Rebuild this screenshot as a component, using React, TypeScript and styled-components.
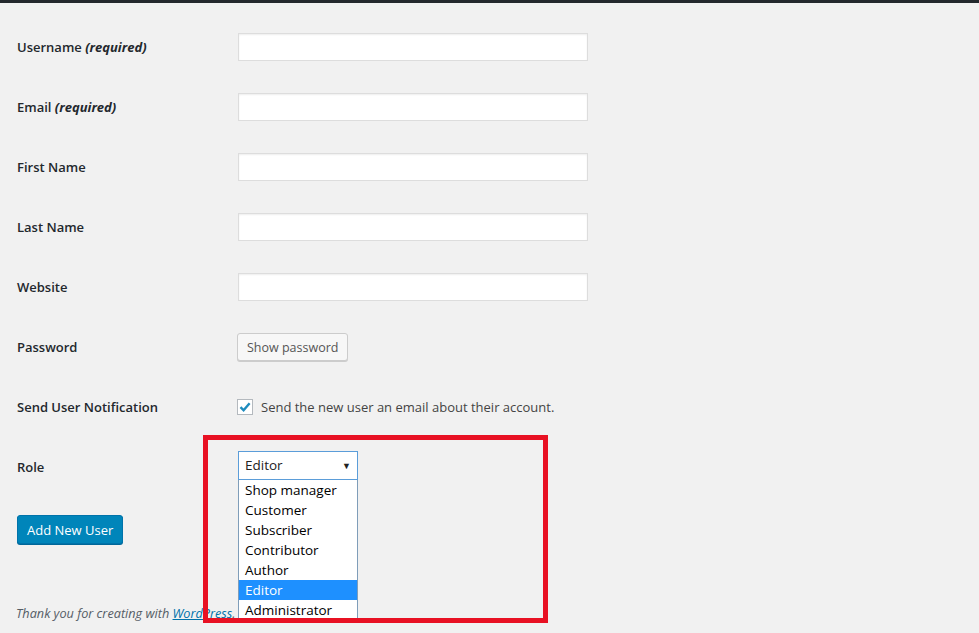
import React from 'react';
import styled, { createGlobalStyle } from 'styled-components';

const GlobalStyle = createGlobalStyle`
html, body {
margin:0;
padding:0;
background:#f1f1f1;
font-family:"Open Sans", "Noto Sans", sans-serif;
color:#23282d;
}
`;

const Page = styled.div`
position:relative;
width:979px;
height:633px;
overflow:hidden;
background:#f1f1f1;
`;
const TopBar = styled.div`
height:3px;
background:#23282d;
`;
const Content = styled.div`
padding:14px 0 0 17px;
`;
const FormTable = styled.div`
display:grid;
grid-template-columns:221px 1fr;
grid-auto-rows:60px;
align-items:center;
`;
const Label = styled.div`
font-size:13px;
font-weight:600;
color:#23282d;
`;
const Required = styled.em`
font-weight:700;
`;
const Field = styled.div`
display:flex;
align-items:center;
`;
const TextInput = styled.input`
box-sizing:border-box;
width:350px;
height:28px;
margin:0;
border:1px solid #ddd;
box-shadow:inset 0 1px 2px rgba(0,0,0,0.07);
background:#fff;
`;
const SecondaryButton = styled.button`
box-sizing:border-box;
height:28px;
padding:0 9px;
margin-left:-1px;
font-family:"Open Sans", sans-serif;
font-size:12.5px;
color:#555;
background:#f7f7f7;
border:1px solid #ccc;
border-radius:3px;
box-shadow:0 1px 0 #ccc;
`;
const CheckLabel = styled.label`
display:flex;
align-items:center;
gap:8px;
margin-left:-1px;
font-size:13px;
color:#444;
`;
const CheckBox = styled.span`
box-sizing:border-box;
width:16px;
height:16px;
border:1px solid #b4b9be;
background:#fff;
display:flex;
align-items:center;
justify-content:center;
`;
const SelectWrap = styled.div`
position:relative;
margin-top:-4px;
`;
const SelectBox = styled.div`
box-sizing:border-box;
width:120px;
height:29px;
padding:0 6px;
display:flex;
align-items:center;
justify-content:space-between;
background:#fff;
border:1px solid #5b9dd9;
font-size:13.5px;
color:#222;
`;
const Arrow = styled.span`
font-size:9px;
color:#222;
`;
const OptionList = styled.ul`
position:absolute;
left:0;
top:100%;
z-index:3;
box-sizing:border-box;
width:120px;
height:141px;
margin:0;
padding:0;
list-style:none;
overflow:hidden;
background:#fff;
border:1px solid #7f9db9;
border-top:none;
`;
const Option = styled.li<{ selected?: boolean }>`
height:20px;
line-height:20px;
padding-left:6px;
font-size:13.5px;
color:${p => (p.selected ? '#fff' : '#000')};
background:${p => (p.selected ? '#1e90ff' : 'transparent')};
`;
const PrimaryButton = styled.button`
margin-top:18px;
box-sizing:border-box;
height:29px;
padding:0 9px;
font-family:"Open Sans", sans-serif;
font-size:13px;
color:#fff;
background:#0085ba;
border:1px solid #0073aa;
border-radius:3px;
box-shadow:0 1px 0 #006799;
`;
const Footer = styled.p`
margin:60px 0 0 -1px;
font-size:12.7px;
font-style:italic;
color:#555d66;
`;
const FooterLink = styled.a`
color:#0073aa;
text-decoration:underline;
`;
const Highlight = styled.div`
position:absolute;
left:203px;
top:435px;
width:345px;
height:188px;
box-sizing:border-box;
border:5px solid #e81123;
z-index:4;
pointer-events:none;
`;

const roles = ['Shop manager', 'Customer', 'Subscriber', 'Contributor', 'Author', 'Editor', 'Administrator'];

const App = () => {
    return <Page>
        <GlobalStyle />
        <TopBar />
        <Content>
            <FormTable>
                <Label>Username <Required>(required)</Required></Label>
                <Field><TextInput /></Field>
                <Label>Email <Required>(required)</Required></Label>
                <Field><TextInput /></Field>
                <Label>First Name</Label>
                <Field><TextInput /></Field>
                <Label>Last Name</Label>
                <Field><TextInput /></Field>
                <Label>Website</Label>
                <Field><TextInput /></Field>
                <Label>Password</Label>
                <Field><SecondaryButton>Show password</SecondaryButton></Field>
                <Label>Send User Notification</Label>
                <Field>
                    <CheckLabel>
                        <CheckBox>
                            <svg width="14" height="14" viewBox="0 0 14 14">
                                <path d="M2.5 7.2 L5.6 10.3 L11.6 3.2" fill="none" stroke="#1e8cbe" strokeWidth="2.4" />
                            </svg>
                        </CheckBox>
                        Send the new user an email about their account.
                    </CheckLabel>
                </Field>
                <Label>Role</Label>
                <Field>
                    <SelectWrap>
                        <SelectBox>Editor<Arrow>▼</Arrow></SelectBox>
                        <OptionList>
                            {roles.map(r => <Option key={r} selected={r === 'Editor'}>{r}</Option>)}
                        </OptionList>
                    </SelectWrap>
                </Field>
            </FormTable>
            <PrimaryButton>Add New User</PrimaryButton>
            <Footer>Thank you for creating with <FooterLink href="#">WordPress</FooterLink>.</Footer>
        </Content>
        <Highlight />
    </Page>
}

export default App;
